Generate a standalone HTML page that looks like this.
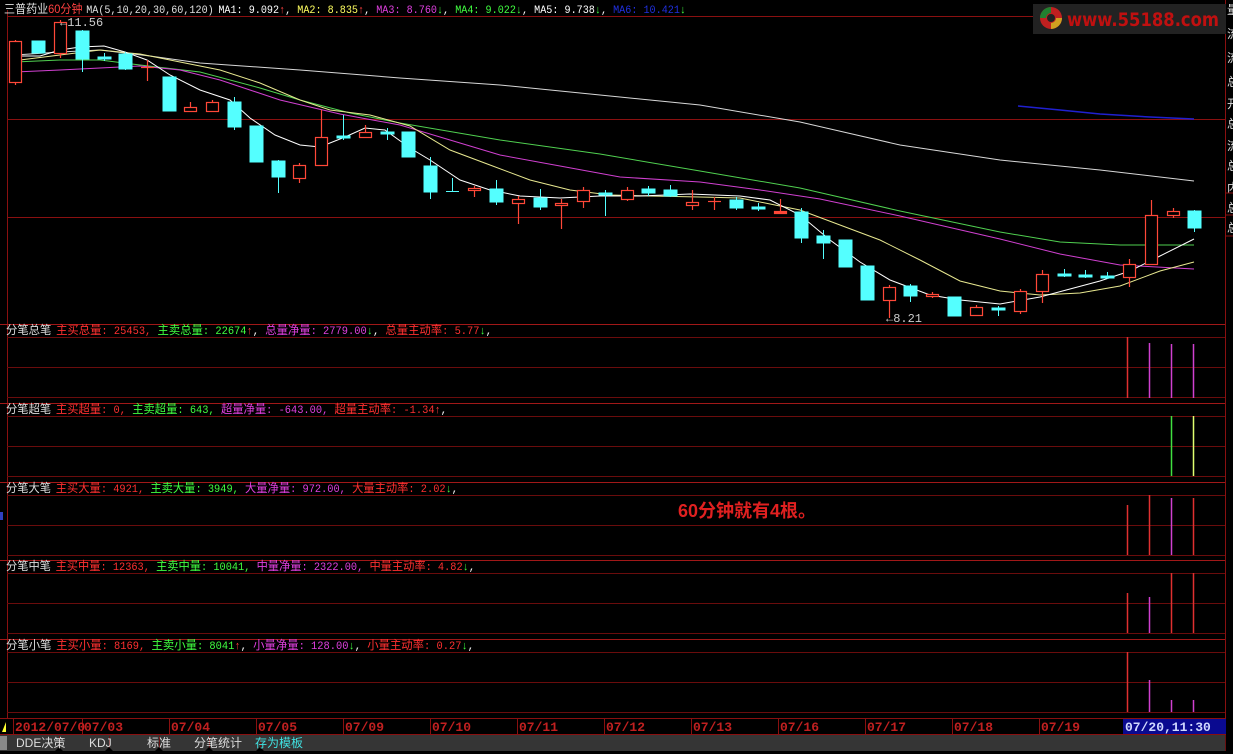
<!DOCTYPE html>
<html><head><meta charset="utf-8"><style>
html,body{margin:0;padding:0;background:#000;width:1233px;height:754px;overflow:hidden}
svg{display:block}
text{font-family:"Liberation Mono","WenQuanYi Zen Hei","Noto Sans CJK SC",monospace;font-size:11px}
.c{font-family:"Liberation Sans","WenQuanYi Zen Hei","Noto Sans CJK SC",sans-serif;font-size:12px}
</style></head><body>
<svg width="1233" height="754" viewBox="0 0 1233 754" xmlns="http://www.w3.org/2000/svg">
<rect width="1233" height="754" fill="#000"/>
<g stroke="#8a1010" stroke-width="1" fill="none">
<line x1="7" y1="16.5" x2="1225" y2="16.5"/>
<line x1="7" y1="119.5" x2="1225" y2="119.5"/>
<line x1="7" y1="217.5" x2="1225" y2="217.5"/>
<line x1="7.5" y1="10" x2="7.5" y2="718"/>
<line x1="1225.5" y1="0" x2="1225.5" y2="735"/>
</g>
<g stroke="#a01818" stroke-width="1">
<line x1="0" y1="324.5" x2="1225" y2="324.5"/>
<line x1="0" y1="403.5" x2="1225" y2="403.5"/>
<line x1="0" y1="482.5" x2="1225" y2="482.5"/>
<line x1="0" y1="560.5" x2="1225" y2="560.5"/>
<line x1="0" y1="639.5" x2="1225" y2="639.5"/>
<line x1="0" y1="718.5" x2="1225" y2="718.5"/>
</g>
<g stroke="#6a0c0c" stroke-width="1">
<line x1="7" y1="337.5" x2="1225" y2="337.5"/><line x1="7" y1="367.5" x2="1225" y2="367.5"/><line x1="7" y1="397.5" x2="1225" y2="397.5"/>
<line x1="7" y1="416.5" x2="1225" y2="416.5"/><line x1="7" y1="446.5" x2="1225" y2="446.5"/><line x1="7" y1="476.5" x2="1225" y2="476.5"/>
<line x1="7" y1="495.5" x2="1225" y2="495.5"/><line x1="7" y1="525.5" x2="1225" y2="525.5"/><line x1="7" y1="555.5" x2="1225" y2="555.5"/>
<line x1="7" y1="573.5" x2="1225" y2="573.5"/><line x1="7" y1="603.5" x2="1225" y2="603.5"/><line x1="7" y1="633.5" x2="1225" y2="633.5"/>
<line x1="7" y1="652.5" x2="1225" y2="652.5"/><line x1="7" y1="682.5" x2="1225" y2="682.5"/><line x1="7" y1="712.5" x2="1225" y2="712.5"/>
</g>
<g fill="none" stroke-width="1">
<polyline stroke="#d8d8d8" points="15,55 60,52 100,50 150,56 200,63 300,70 400,78 500,85 600,95 700,105 800,122 900,145 1000,160 1100,170 1194,181"/>
<polyline stroke="#2020d0" stroke-width="1.5" points="1018,106 1060,110 1100,114 1150,117 1194,119"/>
<polyline stroke="#50d050" points="15,62 60,60 100,60 140,65 200,72 260,88 300,100 350,113 400,123 500,140 600,154 700,171 800,188 900,211 1000,232 1060,242 1120,245 1194,245"/>
<polyline stroke="#d040d0" points="15,72 60,70 100,68 140,66 180,70 220,80 280,100 340,114 400,125 450,140 500,155 560,166 620,177 700,182 760,190 820,199 900,216 1000,239 1060,254 1120,265 1194,269"/>
<polyline stroke="#e8e890" points="20,60 60,55 100,50 140,54 180,62 220,70 260,83 300,100 330,110 370,115 410,126 450,150 490,165 530,180 570,190 610,195 650,196 700,197 740,198 800,210 840,225 880,240 920,260 960,281 1000,291 1040,295 1080,293 1120,286 1160,271 1194,262"/>
<polyline stroke="#ffffff" points="15,56 40,56 60,50 80,47 104,46 125,52 147,60 170,75 200,90 230,100 250,118 275,135 300,145 320,147 345,137 365,128 385,130 410,148 430,160 460,180 490,190 520,196 560,198 600,196 640,196 690,194 740,196 770,200 800,215 830,240 860,262 890,280 930,295 960,300 1000,304 1040,297 1070,289 1100,281 1130,271 1160,256 1194,239"/>
</g>
<g stroke="#ff4838" fill="#000" stroke-width="1.2">
<line x1="15.5" y1="40" x2="15.5" y2="85"/><rect x="9.5" y="41.5" width="12" height="41"/>
<line x1="60.5" y1="20" x2="60.5" y2="58"/><rect x="54.5" y="22.5" width="12" height="31"/>
<line x1="147.5" y1="60" x2="147.5" y2="81"/><line x1="141" y1="67.5" x2="154" y2="67.5"/>
<line x1="190.5" y1="102" x2="190.5" y2="112"/><rect x="184.5" y="107.5" width="12" height="4"/>
<line x1="212.5" y1="100" x2="212.5" y2="112"/><rect x="206.5" y="102.5" width="12" height="9"/>
<line x1="299.5" y1="163" x2="299.5" y2="183"/><rect x="293.5" y="165.5" width="12" height="13"/>
<line x1="321.5" y1="110" x2="321.5" y2="166"/><rect x="315.5" y="137.5" width="12" height="28"/>
<line x1="365.5" y1="125" x2="365.5" y2="138"/><rect x="359.5" y="132.5" width="12" height="5"/>
<line x1="474.5" y1="186" x2="474.5" y2="197"/><rect x="468.5" y="188.5" width="12" height="2"/>
<line x1="518.5" y1="196" x2="518.5" y2="224"/><rect x="512.5" y="199.5" width="12" height="4"/>
<line x1="561.5" y1="199" x2="561.5" y2="229"/><rect x="555.5" y="203.5" width="12" height="2"/>
<line x1="583.5" y1="187" x2="583.5" y2="208"/><rect x="577.5" y="190.5" width="12" height="11"/>
<line x1="627.5" y1="187" x2="627.5" y2="201"/><rect x="621.5" y="190.5" width="12" height="9"/>
<line x1="692.5" y1="190" x2="692.5" y2="210"/><rect x="686.5" y="202.5" width="12" height="3"/>
<line x1="714.5" y1="197" x2="714.5" y2="210"/><line x1="708" y1="201.5" x2="721" y2="201.5"/>
<line x1="780.5" y1="199" x2="780.5" y2="213"/><rect x="774.5" y="211.5" width="12" height="2" fill="#ff4838"/>
<line x1="889.5" y1="285" x2="889.5" y2="318"/><rect x="883.5" y="287.5" width="12" height="13"/>
<line x1="932.5" y1="292" x2="932.5" y2="298"/><rect x="926.5" y="294.5" width="12" height="2"/>
<line x1="976.5" y1="305" x2="976.5" y2="316"/><rect x="970.5" y="307.5" width="12" height="8"/>
<line x1="1020.5" y1="289" x2="1020.5" y2="314"/><rect x="1014.5" y="291.5" width="12" height="20"/>
<line x1="1042.5" y1="270" x2="1042.5" y2="303"/><rect x="1036.5" y="274.5" width="12" height="17"/>
<line x1="1129.5" y1="259" x2="1129.5" y2="287"/><rect x="1123.5" y="264.5" width="12" height="13"/>
<line x1="1151.5" y1="200" x2="1151.5" y2="265"/><rect x="1145.5" y="215.5" width="12" height="49"/>
<line x1="1173.5" y1="208" x2="1173.5" y2="218"/><rect x="1167.5" y="211.5" width="12" height="4"/>
</g>
<g fill="#54ffff" stroke="#54ffff" stroke-width="1">
<rect x="32" y="41" width="13" height="12"/>
<line x1="82.5" y1="30" x2="82.5" y2="72"/><rect x="76" y="31" width="13" height="28"/>
<line x1="104.5" y1="53" x2="104.5" y2="61"/><rect x="98" y="57" width="13" height="2"/>
<line x1="125.5" y1="52" x2="125.5" y2="70"/><rect x="119" y="54" width="13" height="15"/>
<rect x="163" y="77" width="13" height="34"/>
<line x1="234.5" y1="97" x2="234.5" y2="130"/><rect x="228" y="102" width="13" height="25"/>
<rect x="250" y="126" width="13" height="36"/>
<line x1="278.5" y1="160" x2="278.5" y2="193"/><rect x="272" y="161" width="13" height="16"/>
<line x1="343.5" y1="115" x2="343.5" y2="140"/><rect x="337" y="136" width="13" height="2"/>
<line x1="387.5" y1="128" x2="387.5" y2="140"/><rect x="381" y="132" width="13" height="2"/>
<rect x="402" y="132" width="13" height="25"/>
<line x1="430.5" y1="157" x2="430.5" y2="199"/><rect x="424" y="166" width="13" height="26"/>
<line x1="452.5" y1="178" x2="452.5" y2="192"/><line x1="446" y1="191.5" x2="459" y2="191.5"/>
<line x1="496.5" y1="180" x2="496.5" y2="205"/><rect x="490" y="189" width="13" height="13"/>
<line x1="540.5" y1="189" x2="540.5" y2="210"/><rect x="534" y="198" width="13" height="9"/>
<line x1="605.5" y1="190" x2="605.5" y2="216"/><rect x="599" y="193" width="13" height="2"/>
<line x1="648.5" y1="186" x2="648.5" y2="196"/><rect x="642" y="189" width="13" height="4"/>
<line x1="670.5" y1="185" x2="670.5" y2="197"/><rect x="664" y="190" width="13" height="6"/>
<line x1="736.5" y1="197" x2="736.5" y2="210"/><rect x="730" y="200" width="13" height="8"/>
<line x1="758.5" y1="203" x2="758.5" y2="211"/><rect x="752" y="207" width="13" height="2"/>
<line x1="801.5" y1="208" x2="801.5" y2="243"/><rect x="795" y="212" width="13" height="26"/>
<line x1="823.5" y1="230" x2="823.5" y2="259"/><rect x="817" y="236" width="13" height="7"/>
<rect x="839" y="240" width="13" height="27"/>
<rect x="861" y="266" width="13" height="34"/>
<line x1="910.5" y1="284" x2="910.5" y2="302"/><rect x="904" y="286" width="13" height="10"/>
<rect x="948" y="297" width="13" height="19"/>
<line x1="998.5" y1="306" x2="998.5" y2="316"/><rect x="992" y="308" width="13" height="2"/>
<line x1="1064.5" y1="269" x2="1064.5" y2="277"/><rect x="1058" y="274" width="13" height="2"/>
<line x1="1085.5" y1="270" x2="1085.5" y2="278"/><rect x="1079" y="275" width="13" height="2"/>
<line x1="1107.5" y1="272" x2="1107.5" y2="279"/><rect x="1101" y="276" width="13" height="2"/>
<line x1="1194.5" y1="210" x2="1194.5" y2="232"/><rect x="1188" y="211" width="13" height="17"/>
</g>
<text x="60" y="26" fill="#ccc" style="font-size:12px">←11.56</text>
<text x="886" y="322" fill="#ccc" style="font-size:12px">←8.21</text>
<text x="4" y="13" textLength="682" lengthAdjust="spacingAndGlyphs"><tspan fill="#e0e0e0" class="c">三普药业</tspan><tspan fill="#ff4040" class="c">60分钟</tspan><tspan fill="#e0e0e0" dx="4">MA(5,10,20,30,60,120)</tspan><tspan fill="#fff" dx="5">MA1: 9.092</tspan><tspan fill="#ff4040">↑</tspan><tspan fill="#fff">, </tspan><tspan fill="#ffff60">MA2: 8.835</tspan><tspan fill="#ff4040">↑</tspan><tspan fill="#fff">, </tspan><tspan fill="#e040e0">MA3: 8.760</tspan><tspan fill="#40ff40">↓</tspan><tspan fill="#fff">, </tspan><tspan fill="#40ff40">MA4: 9.022</tspan><tspan fill="#40ff40">↓</tspan><tspan fill="#fff">, MA5: 9.738</tspan><tspan fill="#40ff40">↓</tspan><tspan fill="#fff">, </tspan><tspan fill="#2030e0">MA6: 10.421</tspan><tspan fill="#40ff40">↓</tspan></text>
<rect x="1033" y="4" width="193" height="30" fill="#222"/>
<circle cx="1051" cy="18" r="11" fill="#c02020"/>
<path d="M1051 7 A11 11 0 0 0 1040 18 L1046 18 A5 5 0 0 1 1051 13Z" fill="#208030"/>
<path d="M1051 29 A11 11 0 0 0 1062 18 L1056 18 A5 5 0 0 1 1051 23Z" fill="#d0a020"/>
<circle cx="1051" cy="18" r="4" fill="#222"/>
<text x="1067" y="26" fill="#c01010" textLength="152" lengthAdjust="spacingAndGlyphs" style="font-family:'DejaVu Sans',sans-serif;font-weight:bold;font-size:19px">www.55188.com</text>
<g fill="#ddd">
<text x="1227" y="14" class="c">量</text><text x="1227" y="38" class="c">流</text><text x="1227" y="62" class="c">流</text><text x="1227" y="86" class="c">总</text><text x="1227" y="108" class="c">开</text><text x="1227" y="128" class="c">总</text><text x="1227" y="150" class="c">流</text><text x="1227" y="170" class="c">总</text><text x="1227" y="192" class="c">内</text><text x="1227" y="212" class="c">总</text><text x="1227" y="232" class="c">总</text>
</g>
<g stroke="#8a1010"><line x1="1225" y1="193" x2="1233" y2="193"/><line x1="1225" y1="215" x2="1233" y2="215"/><line x1="1225" y1="236" x2="1233" y2="236"/></g>
<text x="6" y="334" textLength="486" lengthAdjust="spacingAndGlyphs"><tspan fill="#ddd" class="c">分笔总笔</tspan><tspan fill="#ff3030" dx="5" class="c">主买总量</tspan><tspan fill="#ff3030">: 25453, </tspan><tspan fill="#40ff40" class="c">主卖总量</tspan><tspan fill="#40ff40">: 22674</tspan><tspan fill="#ff4040">↑</tspan><tspan fill="#fff">, </tspan><tspan fill="#e040e0" class="c">总量净量</tspan><tspan fill="#e040e0">: 2779.00</tspan><tspan fill="#40ff40">↓</tspan><tspan fill="#fff">, </tspan><tspan fill="#ff3030" class="c">总量主动率</tspan><tspan fill="#ff3030">: 5.77</tspan><tspan fill="#40ff40">↓</tspan><tspan fill="#fff">,</tspan></text>
<text x="6" y="413" textLength="441" lengthAdjust="spacingAndGlyphs"><tspan fill="#ddd" class="c">分笔超笔</tspan><tspan fill="#ff3030" dx="5" class="c">主买超量</tspan><tspan fill="#ff3030">: 0, </tspan><tspan fill="#40ff40" class="c">主卖超量</tspan><tspan fill="#40ff40">: 643, </tspan><tspan fill="#e040e0" class="c">超量净量</tspan><tspan fill="#e040e0">: -643.00, </tspan><tspan fill="#ff3030" class="c">超量主动率</tspan><tspan fill="#ff3030">: -1.34</tspan><tspan fill="#ff4040">↑</tspan><tspan fill="#fff">,</tspan></text>
<text x="6" y="492" textLength="452" lengthAdjust="spacingAndGlyphs"><tspan fill="#ddd" class="c">分笔大笔</tspan><tspan fill="#ff3030" dx="5" class="c">主买大量</tspan><tspan fill="#ff3030">: 4921, </tspan><tspan fill="#40ff40" class="c">主卖大量</tspan><tspan fill="#40ff40">: 3949, </tspan><tspan fill="#e040e0" class="c">大量净量</tspan><tspan fill="#e040e0">: 972.00, </tspan><tspan fill="#ff3030" class="c">大量主动率</tspan><tspan fill="#ff3030">: 2.02</tspan><tspan fill="#40ff40">↓</tspan><tspan fill="#fff">,</tspan></text>
<text x="6" y="570" textLength="469" lengthAdjust="spacingAndGlyphs"><tspan fill="#ddd" class="c">分笔中笔</tspan><tspan fill="#ff3030" dx="5" class="c">主买中量</tspan><tspan fill="#ff3030">: 12363, </tspan><tspan fill="#40ff40" class="c">主卖中量</tspan><tspan fill="#40ff40">: 10041, </tspan><tspan fill="#e040e0" class="c">中量净量</tspan><tspan fill="#e040e0">: 2322.00, </tspan><tspan fill="#ff3030" class="c">中量主动率</tspan><tspan fill="#ff3030">: 4.82</tspan><tspan fill="#40ff40">↓</tspan><tspan fill="#fff">,</tspan></text>
<text x="6" y="649" textLength="468" lengthAdjust="spacingAndGlyphs"><tspan fill="#ddd" class="c">分笔小笔</tspan><tspan fill="#ff3030" dx="5" class="c">主买小量</tspan><tspan fill="#ff3030">: 8169, </tspan><tspan fill="#40ff40" class="c">主卖小量</tspan><tspan fill="#40ff40">: 8041</tspan><tspan fill="#ff4040">↑</tspan><tspan fill="#fff">, </tspan><tspan fill="#e040e0" class="c">小量净量</tspan><tspan fill="#e040e0">: 128.00</tspan><tspan fill="#40ff40">↓</tspan><tspan fill="#fff">, </tspan><tspan fill="#ff3030" class="c">小量主动率</tspan><tspan fill="#ff3030">: 0.27</tspan><tspan fill="#40ff40">↓</tspan><tspan fill="#fff">,</tspan></text>
<g stroke-width="1.5">
<line x1="1127.5" y1="337" x2="1127.5" y2="398" stroke="#e03030"/><line x1="1149.5" y1="343" x2="1149.5" y2="398" stroke="#d040d0"/><line x1="1171.5" y1="344" x2="1171.5" y2="398" stroke="#d040d0"/><line x1="1193.5" y1="344" x2="1193.5" y2="398" stroke="#d040d0"/>
<line x1="1171.5" y1="416" x2="1171.5" y2="476" stroke="#40e040"/><line x1="1193.5" y1="416" x2="1193.5" y2="476" stroke="#e0ff70"/>
<line x1="1127.5" y1="505" x2="1127.5" y2="555" stroke="#e03030"/><line x1="1149.5" y1="495" x2="1149.5" y2="555" stroke="#e03030"/><line x1="1171.5" y1="498" x2="1171.5" y2="555" stroke="#d040d0"/><line x1="1193.5" y1="498" x2="1193.5" y2="555" stroke="#e03030"/>
<line x1="1127.5" y1="593" x2="1127.5" y2="633" stroke="#e03030"/><line x1="1149.5" y1="597" x2="1149.5" y2="633" stroke="#d040d0"/><line x1="1171.5" y1="573" x2="1171.5" y2="633" stroke="#e03030"/><line x1="1193.5" y1="573" x2="1193.5" y2="633" stroke="#e03030"/>
<line x1="1127.5" y1="652" x2="1127.5" y2="712" stroke="#e03030"/><line x1="1149.5" y1="680" x2="1149.5" y2="712" stroke="#d040d0"/><line x1="1171.5" y1="700" x2="1171.5" y2="712" stroke="#d040d0"/><line x1="1193.5" y1="700" x2="1193.5" y2="712" stroke="#d040d0"/>
</g>
<text x="678" y="517" fill="#e02020" class="c" style="font-size:18px;font-weight:bold">60分钟就有4根。</text>
<rect x="0" y="512" width="3" height="8" fill="#3040c0"/>
<rect x="0" y="719" width="1233" height="16" fill="#000"/>
<g stroke="#8a1010" fill="none">
<line x1="0" y1="718.5" x2="1226" y2="718.5"/><line x1="0" y1="734.5" x2="1226" y2="734.5"/>
<line x1="13.5" y1="718" x2="13.5" y2="735"/><line x1="82.5" y1="718" x2="82.5" y2="735"/><line x1="169.5" y1="718" x2="169.5" y2="735"/><line x1="256.5" y1="718" x2="256.5" y2="735"/><line x1="343.5" y1="718" x2="343.5" y2="735"/><line x1="430.5" y1="718" x2="430.5" y2="735"/><line x1="517.5" y1="718" x2="517.5" y2="735"/><line x1="604.5" y1="718" x2="604.5" y2="735"/><line x1="691.5" y1="718" x2="691.5" y2="735"/><line x1="778.5" y1="718" x2="778.5" y2="735"/><line x1="865.5" y1="718" x2="865.5" y2="735"/><line x1="952.5" y1="718" x2="952.5" y2="735"/><line x1="1039.5" y1="718" x2="1039.5" y2="735"/>
</g>
<path d="M2 732 L6 722 L6 732Z" fill="#ffff30"/>
<g fill="#c02020" style="font-weight:bold">
<text x="15" y="731" style="font-size:13px">2012/07/0</text><text x="84" y="731" style="font-size:13px">07/03</text><text x="171" y="731" style="font-size:13px">07/04</text><text x="258" y="731" style="font-size:13px">07/05</text><text x="345" y="731" style="font-size:13px">07/09</text><text x="432" y="731" style="font-size:13px">07/10</text><text x="519" y="731" style="font-size:13px">07/11</text><text x="606" y="731" style="font-size:13px">07/12</text><text x="693" y="731" style="font-size:13px">07/13</text><text x="780" y="731" style="font-size:13px">07/16</text><text x="867" y="731" style="font-size:13px">07/17</text><text x="954" y="731" style="font-size:13px">07/18</text><text x="1041" y="731" style="font-size:13px">07/19</text>
</g>
<rect x="1123" y="719" width="103" height="15" fill="#0a0a90"/>
<text x="1125" y="731" fill="#d0d8ff" style="font-size:13px;font-weight:bold">07/20,11:30</text>
<rect x="0" y="735" width="1226" height="16" fill="#353535"/>
<rect x="0" y="751" width="1233" height="3" fill="#000"/>
<rect x="0" y="736" width="7" height="14" fill="#888"/>
<g stroke="#6a1010"><line x1="59.5" y1="736" x2="59.5" y2="751"/><line x1="109.5" y1="736" x2="109.5" y2="751"/><line x1="159.5" y1="736" x2="159.5" y2="751"/><line x1="209.5" y1="736" x2="209.5" y2="751"/><line x1="260.5" y1="736" x2="260.5" y2="751"/><line x1="1225.5" y1="735" x2="1225.5" y2="751"/></g>
<g fill="#000"><path d="M55 751 L59 747 L63 751Z"/><path d="M105 751 L109 747 L113 751Z"/><path d="M155 751 L159 747 L163 751Z"/><path d="M205 751 L209 747 L213 751Z"/><path d="M256 751 L260 747 L264 751Z"/></g>
<g fill="#ddd">
<text x="16" y="747" class="c" style="font-size:12px">DDE决策</text><text x="89" y="747" class="c" style="font-size:12px">KDJ</text><text x="147" y="747" class="c" style="font-size:12px">标准</text><text x="194" y="747" class="c" style="font-size:12px">分笔统计</text><text x="255" y="747" class="c" style="font-size:12px;fill:#40e0e0">存为模板</text>
</g>
</svg>
</body></html>
